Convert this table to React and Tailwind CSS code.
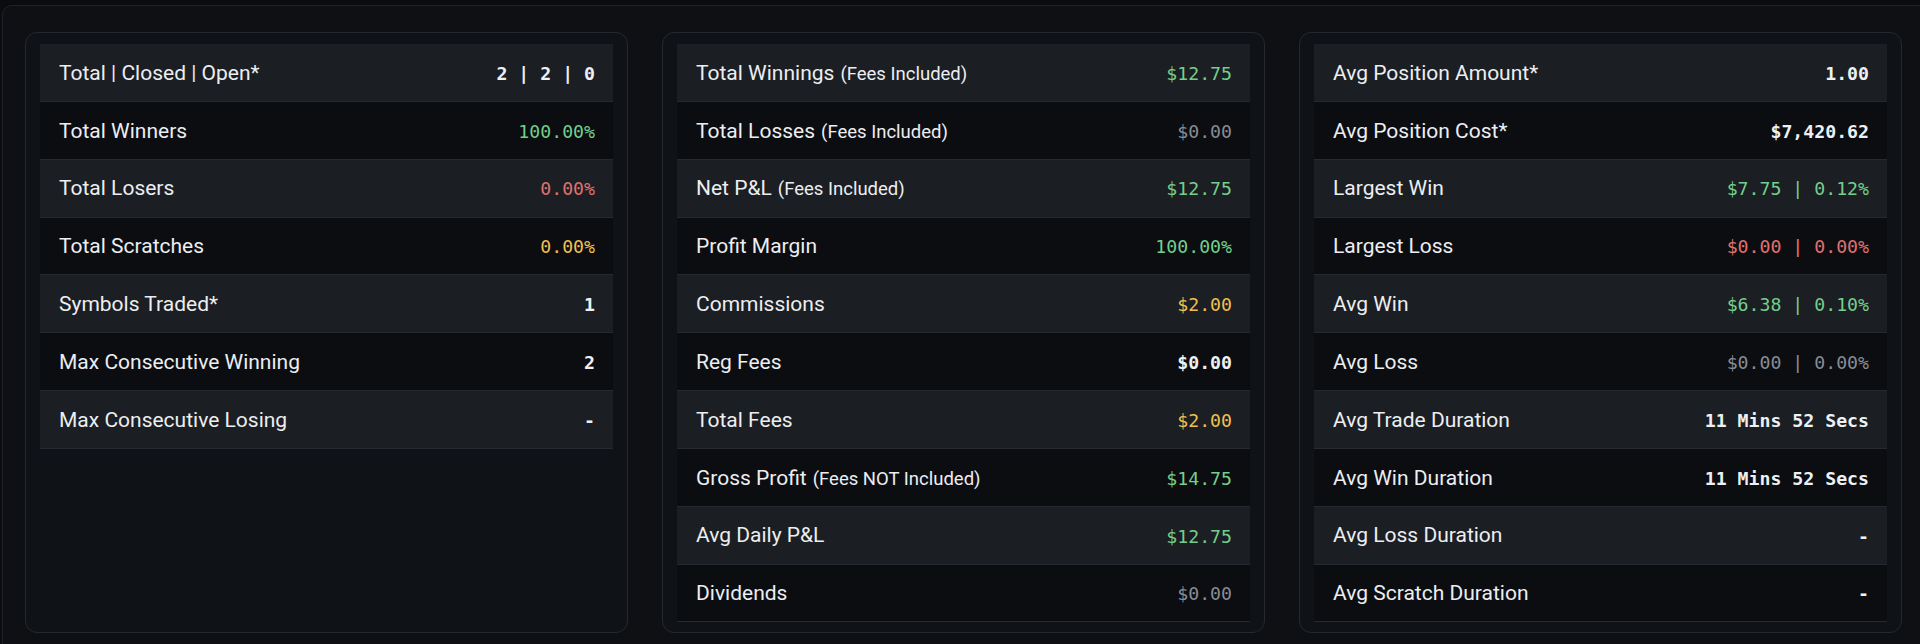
import React from "react";

const GREEN = "text-[#74cf8b]";
const RED = "text-[#e0716f]";
const YELLOW = "text-[#f0c04e]";
const GRAY = "text-[#878c95]";
const WHITE = "text-[#eef0f2] font-bold";

const columns = [
  [
    { label: "Total | Closed | Open*", value: "2 | 2 | 0", tone: WHITE },
    { label: "Total Winners", value: "100.00%", tone: GREEN },
    { label: "Total Losers", value: "0.00%", tone: RED },
    { label: "Total Scratches", value: "0.00%", tone: YELLOW },
    { label: "Symbols Traded*", value: "1", tone: WHITE },
    { label: "Max Consecutive Winning", value: "2", tone: WHITE },
    { label: "Max Consecutive Losing", value: "-", tone: WHITE },
  ],
  [
    { label: "Total Winnings", note: "(Fees Included)", value: "$12.75", tone: GREEN },
    { label: "Total Losses", note: "(Fees Included)", value: "$0.00", tone: GRAY },
    { label: "Net P&L", note: "(Fees Included)", value: "$12.75", tone: GREEN },
    { label: "Profit Margin", value: "100.00%", tone: GREEN },
    { label: "Commissions", value: "$2.00", tone: YELLOW },
    { label: "Reg Fees", value: "$0.00", tone: WHITE },
    { label: "Total Fees", value: "$2.00", tone: YELLOW },
    { label: "Gross Profit", note: "(Fees NOT Included)", value: "$14.75", tone: GREEN },
    { label: "Avg Daily P&L", value: "$12.75", tone: GREEN },
    { label: "Dividends", value: "$0.00", tone: GRAY },
  ],
  [
    { label: "Avg Position Amount*", value: "1.00", tone: WHITE },
    { label: "Avg Position Cost*", value: "$7,420.62", tone: WHITE },
    { label: "Largest Win", value: "$7.75 | 0.12%", tone: GREEN },
    { label: "Largest Loss", value: "$0.00 | 0.00%", tone: RED },
    { label: "Avg Win", value: "$6.38 | 0.10%", tone: GREEN },
    { label: "Avg Loss", value: "$0.00 | 0.00%", tone: GRAY },
    { label: "Avg Trade Duration", value: "11 Mins 52 Secs", tone: WHITE },
    { label: "Avg Win Duration", value: "11 Mins 52 Secs", tone: WHITE },
    { label: "Avg Loss Duration", value: "-", tone: WHITE },
    { label: "Avg Scratch Duration", value: "-", tone: WHITE },
  ],
];

function StatRow({ row, index }) {
  return (
    <div
      className={`flex h-[57.85px] items-center justify-between border-b border-[#262a30] pl-[19px] pr-[18px] pt-[2px] ${
        index % 2 === 0 ? "bg-[#1b1e23]" : "bg-[#0b0d11]"
      }`}
    >
      <span className="font-['Roboto',sans-serif] text-[21px] text-[#eceef1]">
        {row.label}
        {row.note && <span className="ml-[6px] text-[18.5px]">{row.note}</span>}
      </span>
      <span className={`font-['DejaVu_Sans_Mono',monospace] text-[18.2px] whitespace-pre ${row.tone}`}>
        {row.value}
      </span>
    </div>
  );
}

const App = () => {
  return (
    <div className="h-[644px] w-full overflow-hidden bg-[#0a0c0f] pl-[2px] pt-[5px]">
      <div className="w-[1950px] rounded-[10px] border border-[#1f2228] bg-[#0e1014] pb-10 pl-[22px] pt-[26px]">
        <div className="grid grid-cols-[repeat(3,603px)] gap-[34px]">
          {columns.map((rows, i) => (
            <div
              key={i}
              className="rounded-xl border border-[#25282e] bg-[#0f1216] px-[14px] pb-[10px] pt-[11px]"
            >
              {rows.map((row, j) => (
                <StatRow key={row.label} row={row} index={j} />
              ))}
            </div>
          ))}
        </div>
      </div>
    </div>
  );
};

export default App;
